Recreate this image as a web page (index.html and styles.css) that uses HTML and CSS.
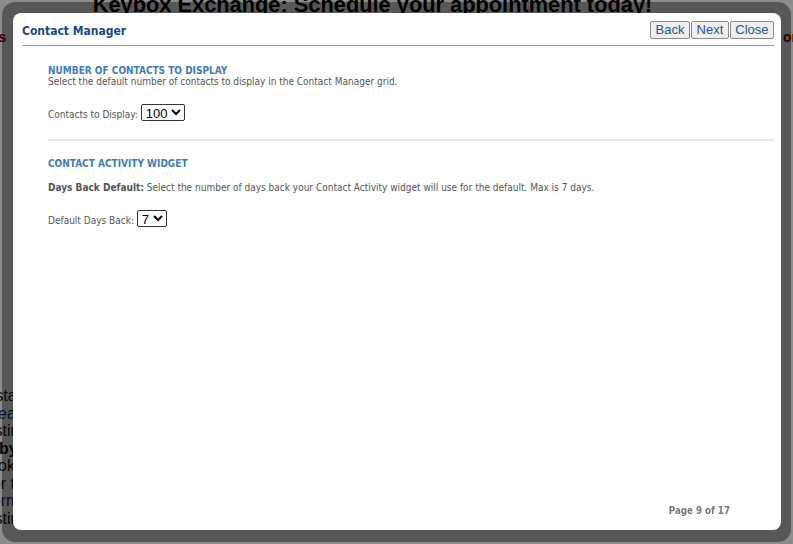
FILE: index.html
```html
<!DOCTYPE html>
<html lang="en">
<head>
    <meta charset="UTF-8">
    <title>Contact Manager</title>
    <link rel="stylesheet" href="styles.css">
</head>
<body>
    <div class="page">
        <h1 class="promo">Keybox Exchange: Schedule your appointment today!</h1>
        <div class="promo-row">
            <span class="red">Tools</span>
            <span class="red">on</span>
        </div>
        <div class="side-text">
            <p>Insta</p>
            <p>Area</p>
            <p>Listin</p>
            <p><b>by</b></p>
            <p>Broke</p>
            <p>For th</p>
            <p>Form</p>
            <p>Listing</p>
        </div>
    </div>

    <div class="overlay"></div>

    <div class="dialog-frame">
        <div class="dialog">
            <div class="dialog-header">
                <span class="dialog-title">Contact Manager</span>
                <div class="nav-buttons">
                    <button class="nav-btn">Back</button>
                    <button class="nav-btn">Next</button>
                    <button class="nav-btn">Close</button>
                </div>
            </div>

            <div class="dialog-body">
                <div class="section">
                    <h2 class="section-title">NUMBER OF CONTACTS TO DISPLAY</h2>
                    <p class="section-desc">Select the default number of contacts to display in the Contact Manager grid.</p>
                    <label class="field">Contacts to Display:
                        <select class="pick">
                            <option>25</option>
                            <option>50</option>
                            <option selected>100</option>
                        </select>
                    </label>
                </div>

                <div class="section section-second">
                    <h2 class="section-title">CONTACT ACTIVITY WIDGET</h2>
                    <p class="section-desc"><b>Days Back Default:</b> Select the number of days back your Contact Activity widget will use for the default. Max is 7 days.</p>
                    <label class="field">Default Days Back:
                        <select class="pick">
                            <option>1</option>
                            <option>3</option>
                            <option selected>7</option>
                        </select>
                    </label>
                </div>
            </div>

            <div class="dialog-footer">Page 9 of 17</div>
        </div>
    </div>
</body>
</html>
```

FILE: styles.css
```css
body {
    margin: 0;
    background-color: #ffffff;
    font-family: "Liberation Sans", Arial, sans-serif;
    overflow: hidden;
    height: 544px;
}

.page {
    height: 544px;
}

.promo {
    margin: -7px 0 0 0;
    padding-right: 48px;
    text-align: center;
    font-size: 21.8px;
    line-height: 24px;
    font-weight: bold;
    color: #000000;
}

.promo-row {
    display: flex;
    justify-content: space-between;
    margin: 12px -7px 0 -30px;
    font-size: 14px;
    font-weight: bold;
    color: #7a0000;
}

.side-text {
    margin: 342px 0 0 -18px;
    font-size: 16px;
    color: #111111;
}

.side-text p {
    margin: 0;
    line-height: 17.5px;
}

.side-text p:nth-child(2),
.side-text p:nth-child(7) {
    color: #0b2f6a;
}

.side-text p:nth-child(4) {
    padding-left: 17px;
}

.overlay {
    position: fixed;
    inset: 0;
    background-color: rgba(0, 0, 0, 0.45);
}

.dialog-frame {
    position: fixed;
    left: 2px;
    top: 2px;
    width: 789px;
    height: 540px;
    box-sizing: border-box;
    padding: 11px 10px 12px 11px;
    border-radius: 13px;
    background-color: rgba(0, 0, 0, 0.38);
    display: flex;
}

.dialog {
    flex: 1;
    background-color: #ffffff;
    border-radius: 8px;
    display: flex;
    flex-direction: column;
    font-family: "DejaVu Sans Condensed", "DejaVu Sans", sans-serif;
    color: #555555;
}

.dialog-header {
    display: flex;
    justify-content: space-between;
    align-items: center;
    margin: 0 7px 0 9px;
    padding: 8px 0 6px 0;
    border-bottom: 1px solid #9a9a9a;
}

.dialog-title {
    font-size: 12px;
    font-weight: bold;
    color: #174a86;
    padding-top: 2px;
}

.nav-buttons {
    display: flex;
    gap: 1px;
}

.nav-btn {
    font-family: "Liberation Sans", Arial, sans-serif;
    font-size: 13px;
    color: #24578f;
    background-color: #efefef;
    border: 1px solid #8a8a8a;
    border-radius: 2px;
    height: 18px;
    padding: 0 4.5px;
    line-height: 16px;
}

.dialog-body {
    flex: 1;
    padding: 19px 7px 0 35px;
}

.section-title {
    margin: 0;
    font-size: 10px;
    font-weight: bold;
    color: #3f7db5;
}

.section-desc {
    margin: 0;
    font-size: 10px;
}

.field {
    display: block;
    margin-top: 17px;
    font-size: 10px;
}

.pick {
    font-family: "Liberation Sans", Arial, sans-serif;
    font-size: 13px;
    color: #000000;
    height: 17px;
    padding: 0;
    border: 1px solid #333333;
    border-radius: 2px;
    background-color: #ffffff;
}

.section-second {
    margin-top: 18px;
    padding-top: 17px;
    border-top: 2px solid #e6e6e6;
}

.section-second .section-desc {
    margin-top: 13px;
}

.section-second .field {
    margin-top: 17px;
}

.dialog-footer {
    align-self: flex-end;
    padding: 0 51px 14px 0;
    font-size: 9.7px;
    font-weight: bold;
    color: #777777;
}
```
